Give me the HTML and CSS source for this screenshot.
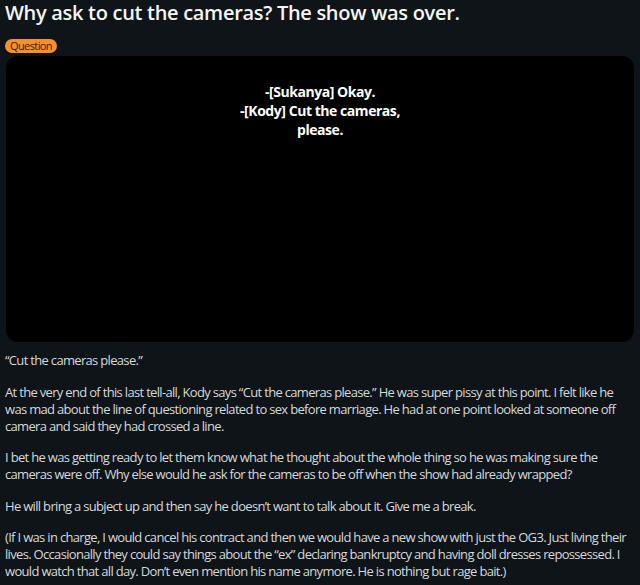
FILE: index.html
```
<!DOCTYPE html>
<html lang="en">
<head>
<meta charset="utf-8">
<title>Why ask to cut the cameras?</title>
<link rel="stylesheet" href="styles.css">
</head>
<body>
<article class="post">
  <h1 class="post-title">Why ask to cut the cameras? The show was over.</h1>
  <span class="flair">Question</span>
  <div class="media">
    <p class="caption">-[Sukanya] Okay.<br>-[Kody] Cut the cameras,<br>please.</p>
  </div>
  <div class="post-body">
    <p>“Cut the cameras please.”</p>
    <p>At the very end of this last tell-all, Kody says “Cut the cameras please.” He was super pissy at this point. I felt like he<br>was mad about the line of questioning related to sex before marriage. He had at one point looked at someone off<br>camera and said they had crossed a line.</p>
    <p>I bet he was getting ready to let them know what he thought about the whole thing so he was making sure the<br>cameras were off. Why else would he ask for the cameras to be off when the show had already wrapped?</p>
    <p>He will bring a subject up and then say he doesn’t want to talk about it. Give me a break.</p>
    <p>(If I was in charge, I would cancel his contract and then we would have a new show with just the OG3. Just living their<br>lives. Occasionally they could say things about the “ex” declaring bankruptcy and having doll dresses repossessed. I<br>would watch that all day. Don’t even mention his name anymore. He is nothing but rage bait.)</p>
  </div>
</article>
</body>
</html>
```
FILE: styles.css
```
html, body {
  margin: 0;
  background: #0e1418;
}
body {
  font-family: "Open Sans", "Noto Sans", sans-serif;
  color: #d6d9db;
}
.post {
  padding: 0 0 0 5px;
  display: flex;
  flex-direction: column;
  align-items: flex-start;
}
.post-title {
  margin: 0;
  font-size: 20px;
  line-height: 26px;
  font-weight: 600;
  letter-spacing: -0.3px;
  color: #f3f5f6;
}
.flair {
  margin-top: 13px;
  height: 14px;
  padding: 0 5px;
  border-radius: 7px;
  background: #f5902e;
  color: #3d1c02;
  font-size: 11px;
  line-height: 14px;
  letter-spacing: -0.6px;
}
.media {
  align-self: stretch;
  margin: 3px 6px 0 1px;
  height: 286px;
  background: #000;
  border-radius: 12px;
  padding-top: 26px;
  box-sizing: border-box;
}
.caption {
  margin: 0;
  text-align: center;
  color: #fff;
  font-weight: 700;
  font-size: 14px;
  line-height: 19px;
  letter-spacing: -0.45px;
}
.post-body {
  margin-top: 10px;
  font-size: 13px;
  line-height: 17px;
  letter-spacing: -0.68px;
}
.post-body p {
  margin: 0 0 14.5px;
  white-space: nowrap;
}
```
